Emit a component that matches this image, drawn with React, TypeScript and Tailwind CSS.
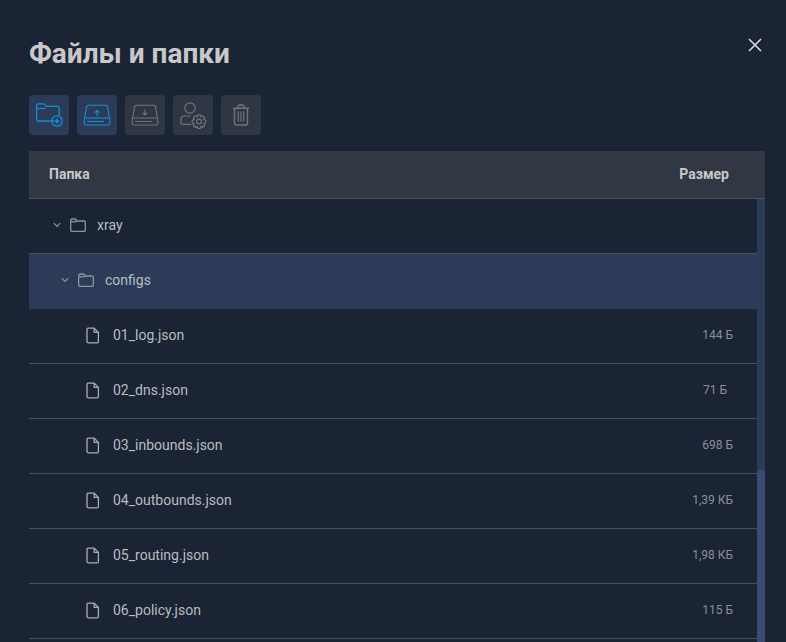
import React from "react";

const Folder = () => (
  <svg width="18" height="16" viewBox="0 0 18 16" fill="none" stroke="#8f949b" strokeWidth="1.3" strokeLinejoin="round">
    <path d="M1.7 13.2V3.2c0-.7.5-1.2 1.2-1.2h3.6l1.6 2h7c.7 0 1.2.5 1.2 1.2v8c0 .7-.5 1.2-1.2 1.2H2.9c-.7 0-1.2-.5-1.2-1.2z" />
    <path d="M1.7 4.8h6" />
  </svg>
);

const Chevron = () => (
  <svg width="8" height="6" viewBox="0 0 8 6" fill="none" stroke="#8f949b" strokeWidth="1.2">
    <path d="M.8 1.2 4 4.4 7.2 1.2" />
  </svg>
);

const FileIcon = () => (
  <svg width="16" height="17" viewBox="0 0 16 17" fill="none" stroke="#a9acb1" strokeWidth="1.3" strokeLinejoin="round">
    <path d="M3 1.2h6.2L13.4 5.4v9c0 .8-.6 1.4-1.4 1.4H3.4c-.8 0-1.4-.6-1.4-1.4V2.4c0-.7.4-1.2 1-1.2z" />
    <path d="M9.2 1.2v4.2h4.2" />
  </svg>
);

const Btn = ({ active, children }: { active?: boolean; children: React.ReactNode }) => (
  <div className={`w-10 h-10 rounded flex items-center justify-center ${active ? "bg-[#2c3c58]" : "bg-[#2f3744]"}`}>{children}</div>
);

const files = [
  ["01_log.json", "144 Б", ""],
  ["02_dns.json", "71 Б", "pr-[6px]"],
  ["03_inbounds.json", "698 Б", ""],
  ["04_outbounds.json", "1,39 КБ", ""],
  ["05_routing.json", "1,98 КБ", ""],
  ["06_policy.json", "115 Б", ""],
];

export default function App() {
  return (
    <div className="h-[642px] w-[786px] overflow-hidden bg-[#1b2435] pl-[29px] pr-[21px] font-['Roboto',sans-serif] flex flex-col">
      <div className="flex items-start justify-between h-[95px] pt-[36px] shrink-0">
        <h1 className="text-[28px] leading-[36px] font-bold text-[#c8c8c8]">Файлы и папки</h1>
        <svg width="16" height="16" viewBox="0 0 16 16" fill="none" stroke="#dfe1e4" strokeWidth="1.5" className="mt-[1px] mr-[2px]">
          <path d="M2 2l12 12M14 2 2 14" />
        </svg>
      </div>

      <div className="flex gap-2 h-[56px] shrink-0">
        <Btn active>
          <svg width="28" height="26" viewBox="0 0 28 26" fill="none" stroke="#0f8fd6" strokeWidth="1.3" strokeLinejoin="round">
            <path d="M19 19H3c-.8 0-1.4-.6-1.4-1.4V3.2c0-.8.6-1.4 1.4-1.4h6.2l2.2 2.6h11.4c.8 0 1.4.6 1.4 1.4v8" />
            <path d="M1.6 6.5h9" />
            <circle cx="22" cy="19" r="5.2" />
            <path d="M22 16.4v5.2M19.4 19h5.2" strokeWidth="1.6" />
          </svg>
        </Btn>
        <Btn active>
          <svg width="28" height="24" viewBox="0 0 28 24" fill="none" stroke="#0f8fd6" strokeWidth="1.1" strokeLinejoin="round">
            <path d="M1.6 15.5 3.6 3.4c.1-.7.7-1.2 1.4-1.2h18c.7 0 1.3.5 1.4 1.2l2 12.1" />
            <rect x="1.2" y="15" width="25.6" height="7" rx="1.4" />
            <path d="M4 18.5h17" strokeWidth="1" />
            <path d="M14 13V7.5M11.8 9.7 14 7.5l2.2 2.2" />
          </svg>
        </Btn>
        <Btn>
          <svg width="28" height="24" viewBox="0 0 28 24" fill="none" stroke="#6f757d" strokeWidth="1.1" strokeLinejoin="round">
            <path d="M1.6 15.5 3.6 3.4c.1-.7.7-1.2 1.4-1.2h18c.7 0 1.3.5 1.4 1.2l2 12.1" />
            <rect x="1.2" y="15" width="25.6" height="7" rx="1.4" />
            <path d="M4 18.5h17" strokeWidth="1" />
            <path d="M14 6.5V12M11.8 9.8 14 12l2.2-2.2" />
          </svg>
        </Btn>
        <Btn>
          <svg width="28" height="30" viewBox="0 0 28 30" fill="none" stroke="#6f757d" strokeWidth="1.2" strokeLinejoin="round">
            <circle cx="11" cy="8" r="5.2" />
            <path d="M12 16H5.5C3.5 16 2 17.5 2 19.5V23c0 .8.6 1.4 1.4 1.4h8.6" />
            <circle cx="20" cy="21.5" r="2.4" />
            <path d="M18.6 14.8h2.8l.5 2 1.9-1 1.9 1.9-1 1.9 2 .6v2.8l-2 .6 1 1.9-1.9 1.9-1.9-1-.5 2h-2.8l-.5-2-1.9 1-1.9-1.9 1-1.9-2-.6v-2.8l2-.6-1-1.9 1.9-1.9 1.9 1z" />
          </svg>
        </Btn>
        <Btn>
          <svg width="18" height="22" viewBox="0 0 18 22" fill="none" stroke="#6f757d" strokeWidth="1.4" strokeLinejoin="round">
            <path d="M1 4.2h16M6 4V2.4C6 1.6 6.6 1 7.4 1h3.2c.8 0 1.4.6 1.4 1.4V4" />
            <path d="M2.5 4.2v14.6c0 1.2.9 2.2 2 2.2h9c1.1 0 2-1 2-2.2V4.2" />
            <path d="M6.3 7.5v10M9 7.5v10M11.7 7.5v10" strokeWidth="1.2" />
          </svg>
        </Btn>
      </div>

      <div className="h-[48px] shrink-0 bg-[#313843] border-b border-[#4a4f59] flex items-center justify-between pl-5 pr-9 pb-[2px] text-sm font-bold text-[#c8c8c8]">
        <span>Папка</span>
        <span>Размер</span>
      </div>

      <div className="flex flex-1 min-h-0 overflow-hidden">
        <div className="flex-1 min-w-0">
          <div className="h-[55px] border-b border-[#4a4f59] flex items-center gap-2 pl-[24px] pb-[2px] text-sm text-[#b9bcc0]">
            <Chevron />
            <Folder />
            <span className="ml-[2px]">xray</span>
          </div>
          <div className="h-[55px] -mr-2 bg-[#2c3c58] flex items-center gap-2 pl-[32px] pb-[4px] text-sm text-[#b9bcc0]">
            <Chevron />
            <Folder />
            <span className="ml-[2px]">configs</span>
          </div>
          {files.map(([name, size, extra]) => (
            <div key={name} className="h-[55px] border-b border-[#4a4f59] flex items-center pl-[56px] pr-6 pb-[2px] text-sm text-[#b9bcc0]">
              <FileIcon />
              <span className="ml-[12px] flex-1">{name}</span>
              <span className={`text-xs text-[#8a8f96] ${extra}`}>{size}</span>
            </div>
          ))}
        </div>
        <div className="w-2 shrink-0 bg-[#2c3c58] pt-[271px]">
          <div className="h-[400px] rounded-t bg-[#3a4c74]" />
        </div>
      </div>
    </div>
  );
}
